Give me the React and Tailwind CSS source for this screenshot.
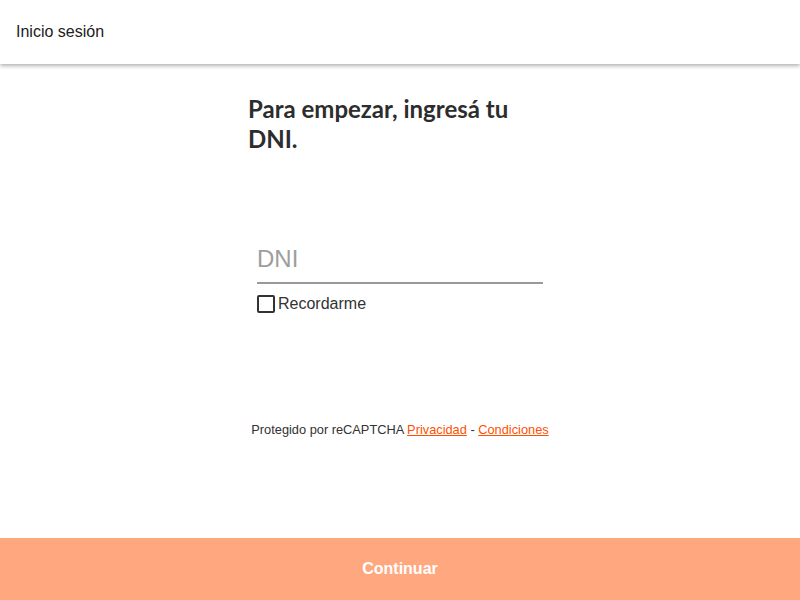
export default function App() {
  return (
    <div className="flex h-[600px] flex-col bg-white font-['Liberation_Sans',Arial,sans-serif] text-[#212121]">
      <header className="relative z-10 flex h-16 shrink-0 items-center bg-white px-4 shadow-[0_2px_4px_rgba(0,0,0,0.3)]">
        <span className="text-base">Inicio sesión</span>
      </header>

      <main className="flex flex-1 flex-col items-center">
        <div className="w-[304px] pt-[30px]">
          <h1 className="pr-[20px] font-['Lato',sans-serif] text-[24px] font-bold leading-[30px] text-[#2d2d2d]">
            Para empezar, ingresá tu DNI.
          </h1>

          <div className="mt-[85px] px-[9px]">
            <input
              type="text"
              placeholder="DNI"
              className="h-[45px] w-full border-b-2 border-[#999] bg-transparent pb-[4px] text-[24px] text-[#212121] outline-none placeholder:text-[#9e9e9e]"
            />
            <label className="mt-[8px] flex items-center gap-[3px] text-base text-[#333]">
              <span className="h-[18px] w-[18px] rounded-[2px] border-2 border-[#333]" />
              Recordarme
            </label>
          </div>
        </div>

        <p className="mt-[104px] text-[12.8px] text-[#333]">
          Protegido por reCAPTCHA{" "}
          <a className="text-[#ff5000] underline">Privacidad</a> -{" "}
          <a className="text-[#ff5000] underline">Condiciones</a>
        </p>
      </main>

      <button
        disabled
        className="h-[62px] w-full shrink-0 bg-[#ffa87f] text-base font-bold text-white"
      >
        Continuar
      </button>
    </div>
  );
}
